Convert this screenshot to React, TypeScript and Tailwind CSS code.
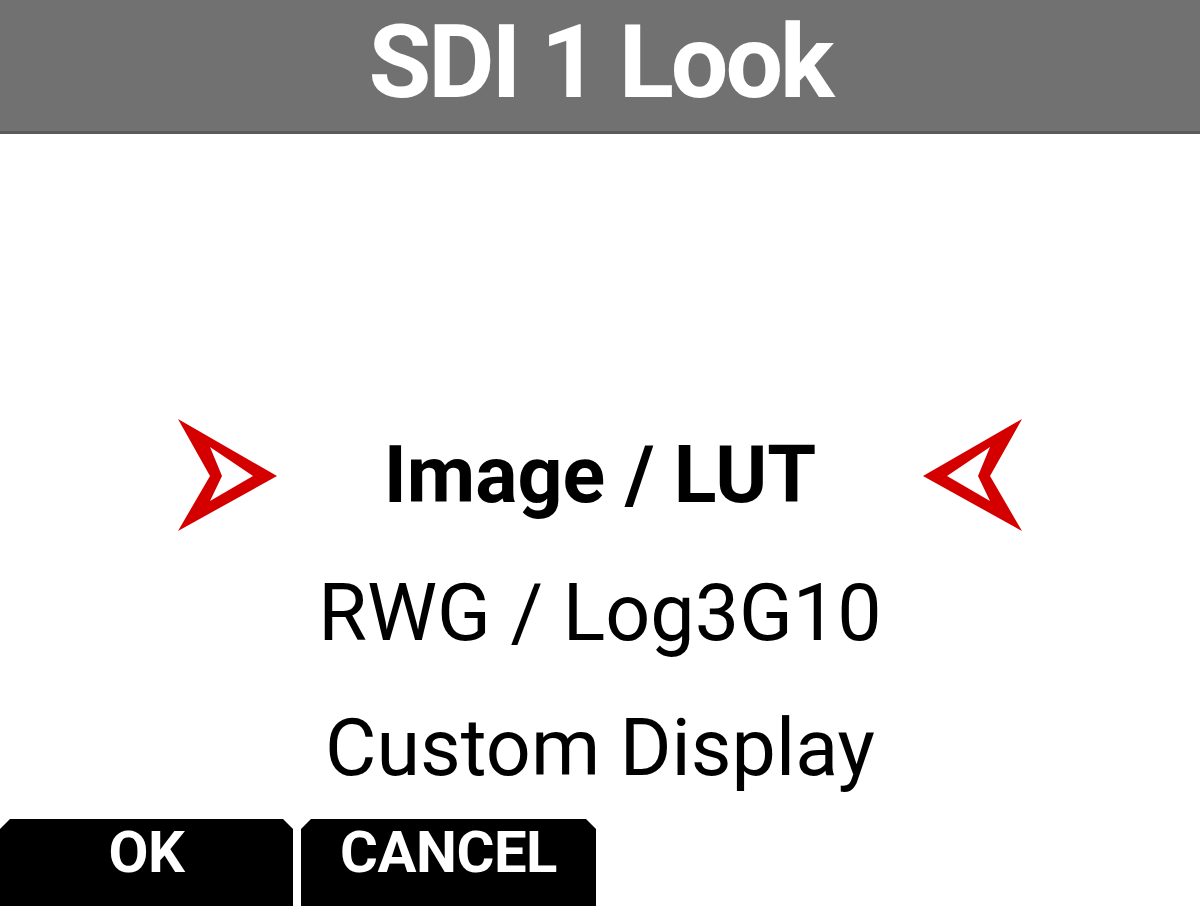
import React from "react";

const LeftArrow: React.FC = () => (
  <svg width="100" height="112" viewBox="0 0 100 112">
    <path
      fillRule="evenodd"
      fill="#d40000"
      d="M0 0 L99 57 L0 112 L32 57 Z M32 28 L44 57 L32 82 L75 57 Z"
    />
  </svg>
);

const RightArrow: React.FC = () => (
  <svg width="100" height="112" viewBox="0 0 100 112">
    <path
      fillRule="evenodd"
      fill="#d40000"
      d="M100 0 L1 57 L100 112 L68 57 Z M68 28 L56 57 L68 82 L25 57 Z"
    />
  </svg>
);

export default function App() {
  return (
    <div
      className="w-[1200px] h-[906px] bg-white flex flex-col overflow-hidden"
      style={{ fontFamily: "Roboto, 'Noto Sans', sans-serif" }}
    >
      <div className="h-[134px] shrink-0 bg-[#717171] border-b-[3px] border-[#5a5a5a] flex items-center justify-center">
        <div className="text-white font-bold text-[102px] leading-none tracking-[-3px] pb-[8px]">
          SDI 1 Look
        </div>
      </div>

      <div className="pt-[273px] flex flex-col">
        <div className="h-[136px] flex items-center justify-between px-[178px]">
          <LeftArrow />
          <div className="text-black font-bold text-[79px] leading-none">
            Image / LUT
          </div>
          <RightArrow />
        </div>
        <div className="h-[140px] flex items-center justify-center text-black text-[79px] leading-none">
          RWG / Log3G10
        </div>
        <div className="h-[130px] flex items-center justify-center text-black text-[79px] leading-none">
          Custom Display
        </div>
      </div>

      <div className="mt-auto h-[87px] flex gap-[8px]">
        <div className="w-[293px] bg-black text-white font-bold text-[58px] leading-none tracking-[-0.5px] flex justify-center pt-[4px] [clip-path:polygon(0_10px,10px_0,calc(100%-10px)_0,100%_10px,100%_100%,0_100%)]">
          OK
        </div>
        <div className="w-[295px] bg-black text-white font-bold text-[58px] leading-none tracking-[-0.5px] flex justify-center pt-[4px] [clip-path:polygon(0_10px,10px_0,calc(100%-10px)_0,100%_10px,100%_100%,0_100%)]">
          CANCEL
        </div>
      </div>
    </div>
  );
}
